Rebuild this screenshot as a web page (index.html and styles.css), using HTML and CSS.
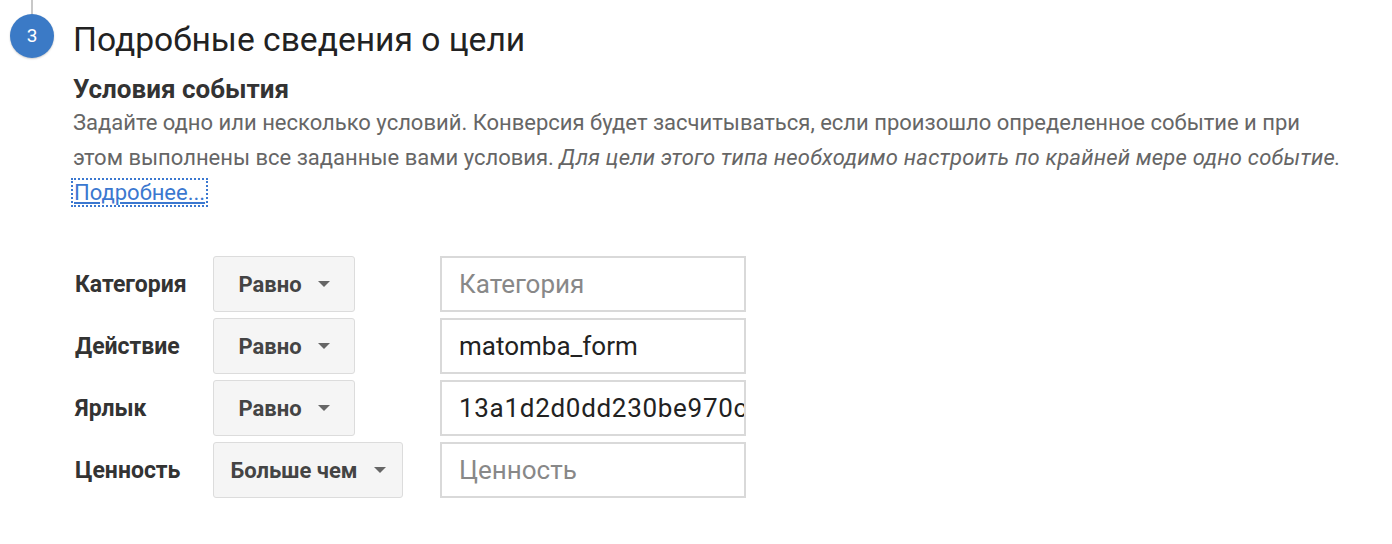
FILE: index.html
```html
<!DOCTYPE html>
<html lang="ru">
<head>
<meta charset="utf-8">
<title>Подробные сведения о цели</title>
<link rel="stylesheet" href="styles.css">
</head>
<body>
<div class="step">
  <div class="rail">
    <div class="rail-line"></div>
    <div class="badge">3</div>
  </div>
  <div class="content">
    <h1 class="title">Подробные сведения о цели</h1>
    <h2 class="subtitle">Условия события</h2>
    <p class="desc">Задайте одно или несколько условий. Конверсия будет засчитываться, если произошло определенное событие и при этом выполнены все заданные вами условия. <em>Для цели этого типа необходимо настроить по крайней мере одно событие.</em> <a class="more" href="#">Подробнее...</a></p>
    <div class="conditions">
      <div class="label">Категория</div>
      <button class="select">Равно <span class="caret"></span></button>
      <div class="field placeholder">Категория</div>

      <div class="label">Действие</div>
      <button class="select">Равно <span class="caret"></span></button>
      <div class="field">matomba_form</div>

      <div class="label">Ярлык</div>
      <button class="select">Равно <span class="caret"></span></button>
      <div class="field wide-digits">13a1d2d0dd230be970c</div>

      <div class="label">Ценность</div>
      <button class="select wide">Больше чем <span class="caret"></span></button>
      <div class="field placeholder">Ценность</div>
    </div>
  </div>
</div>
</body>
</html>
```

FILE: styles.css
```css
html, body {
  margin: 0;
  padding: 0;
  background: #fff;
  font-family: Roboto, "Noto Sans", Arial, sans-serif;
}
.step {
  display: flex;
  padding-left: 10px;
}
.rail {
  width: 44px;
  flex: none;
  display: flex;
  flex-direction: column;
  align-items: center;
}
.rail-line {
  width: 2px;
  height: 14px;
  background: #c8c8c8;
}
.badge {
  width: 44px;
  height: 44px;
  border-radius: 50%;
  background: #3b7ac6;
  color: #fff;
  font-size: 19px;
  line-height: 44px;
  text-align: center;
  box-shadow: 0 1px 2px rgba(0,0,0,0.2);
}
.content {
  margin-left: 19px;
  width: 1280px;
}
.title {
  margin: 17px 0 0;
  font-size: 33.6px;
  font-weight: 400;
  color: #222;
  line-height: 46px;
}
.subtitle {
  margin: 10px 0 0;
  font-size: 26px;
  font-weight: 700;
  color: #333;
  line-height: 32px;
}
.desc {
  margin: 0;
  font-size: 22px;
  line-height: 35px;
  color: #666;
}
.desc em {
  font-style: italic;
  letter-spacing: 0.2px;
}
.more {
  color: #3b78d0;
  text-decoration: underline;
  outline: 2px dotted #3b78d0;
  outline-offset: 0;
  padding: 0 1px;
}
.conditions {
  margin-top: 46px;
  margin-left: 2px;
  display: grid;
  grid-template-columns: 138px 227px 306px;
  grid-auto-rows: 56px;
  row-gap: 6px;
  align-items: center;
}
.label {
  font-size: 23px;
  font-weight: 700;
  color: #333;
}
.select {
  height: 56px;
  width: 142px;
  border: 1px solid #dcdcdc;
  border-radius: 3px;
  background: #f5f5f5;
  font-family: inherit;
  font-size: 22px;
  font-weight: 700;
  color: #444;
  display: flex;
  align-items: center;
  justify-content: center;
  gap: 16px;
  padding: 0;
}
.select.wide {
  width: 190px;
}
.caret {
  width: 0;
  height: 0;
  border-left: 6px solid transparent;
  border-right: 6px solid transparent;
  border-top: 6px solid #666;
}
.field {
  width: 306px;
  height: 56px;
  box-sizing: border-box;
  border: 2px solid #d9d9d9;
  padding: 0 17px;
  font-size: 26px;
  color: #222;
  display: flex;
  align-items: center;
  overflow: hidden;
  white-space: nowrap;
}
.wide-digits {
  letter-spacing: 0.7px;
}
.placeholder {
  color: #888;
}
```
